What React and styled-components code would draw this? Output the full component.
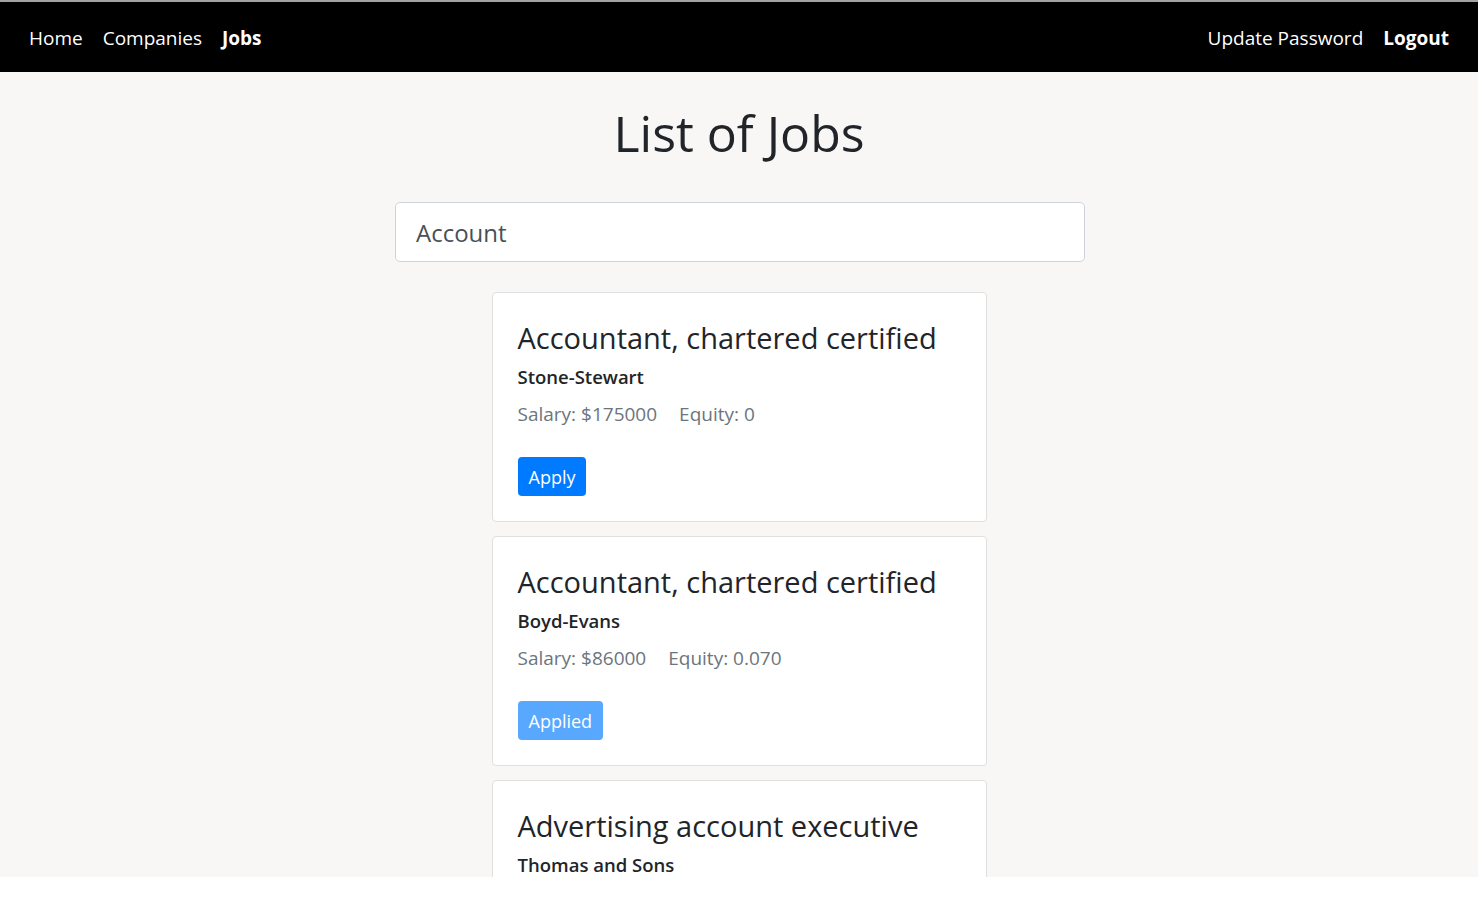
import React, { useState } from "react";
import styled, { createGlobalStyle } from "styled-components";

const GlobalStyle = createGlobalStyle`
  * {
    box-sizing: border-box;
  }
  body {
    margin: 0;
    background: #fff;
    font-family: "Open Sans", "Noto Sans", "Liberation Sans", sans-serif;
    color: #212529;
  }
`;

const jobs = [
  {
    id: 1,
    title: "Accountant, chartered certified",
    company: "Stone-Stewart",
    salary: 175000,
    equity: "0",
    applied: false,
  },
  {
    id: 2,
    title: "Accountant, chartered certified",
    company: "Boyd-Evans",
    salary: 86000,
    equity: "0.070",
    applied: true,
  },
  {
    id: 3,
    title: "Advertising account executive",
    company: "Thomas and Sons",
    salary: 130000,
    equity: "0.064",
    applied: false,
  },
];

const NavBar = () => (
  <Nav>
    <NavGroup>
      <NavLink href="#">Home</NavLink>
      <NavLink href="#">Companies</NavLink>
      <NavLink href="#" active>
        Jobs
      </NavLink>
    </NavGroup>
    <NavGroup>
      <NavLink href="#">Update Password</NavLink>
      <NavLink href="#" active>
        Logout
      </NavLink>
    </NavGroup>
  </Nav>
);

const JobCard = ({ job }) => (
  <Card>
    <CardTitle>{job.title}</CardTitle>
    <Company>{job.company}</Company>
    <Details>
      <span>Salary: ${job.salary}</span>
      <span>Equity: {job.equity}</span>
    </Details>
    <ApplyButton disabled={job.applied}>
      {job.applied ? "Applied" : "Apply"}
    </ApplyButton>
  </Card>
);

const App = () => {
  const [search, setSearch] = useState("Account");
  return (
    <>
      <GlobalStyle />
      <NavBar />
      <Main>
        <Title>List of Jobs</Title>
        <SearchInput
          type="text"
          value={search}
          onChange={event => setSearch(event.target.value)}
        />
        <CardList>
          {jobs.map(job => (
            <JobCard key={job.id} job={job} />
          ))}
        </CardList>
      </Main>
    </>
  );
};

const Nav = styled.nav`
  display: flex;
  justify-content: space-between;
  align-items: center;
  height: 72px;
  padding: 2px 29px 0 29px;
  background: #000;
  border-top: 2px solid #a3a3a3;
`;

const NavGroup = styled.div`
  display: flex;
  align-items: center;
  gap: 20px;
`;

const NavLink = styled.a`
  color: #fff;
  text-decoration: none;
  font-size: 19px;
  font-weight: ${props => (props.active ? 700 : 400)};
`;

const Main = styled.main`
  display: flex;
  flex-direction: column;
  align-items: center;
  height: 805px;
  background: #f8f7f5;
  & > * {
    flex-shrink: 0;
  }
`;

const Title = styled.h1`
  margin: 31px 0 39px;
  font-size: 50px;
  font-weight: 500;
  line-height: 1.2;
  color: #212529;
`;

const SearchInput = styled.input`
  width: 690px;
  height: 60px;
  margin-left: 2px;
  padding: 0 20px;
  font-family: inherit;
  font-size: 24px;
  color: #495057;
  background: #fff;
  border: 1px solid #ced4da;
  border-radius: 5px;
  outline: none;
`;

const CardList = styled.div`
  display: flex;
  flex-direction: column;
  gap: 14px;
  width: 495px;
  margin-top: 30px;
`;

const Card = styled.div`
  display: flex;
  flex-direction: column;
  align-items: flex-start;
  flex-shrink: 0;
  height: 230px;
  padding: 26px 25px 25px;
  background: #fff;
  border: 1px solid #dfdfdf;
  border-radius: 4px;
`;

const CardTitle = styled.h3`
  margin: 0;
  font-size: 29px;
  font-weight: 500;
  line-height: 1.3;
  color: #212529;
`;

const Company = styled.div`
  margin-top: 7px;
  font-size: 18.5px;
  font-weight: 600;
  color: #212529;
`;

const Details = styled.div`
  display: flex;
  gap: 22px;
  margin-top: 12px;
  font-size: 19px;
  color: #6c757d;
`;

const ApplyButton = styled.button`
  margin-top: auto;
  height: 39px;
  padding: 0 11px;
  font-family: inherit;
  font-size: 18px;
  color: #fff;
  background: #007bff;
  border: none;
  border-radius: 4px;
  cursor: pointer;
  &:disabled {
    opacity: 0.65;
    cursor: default;
  }
`;

export default App;
